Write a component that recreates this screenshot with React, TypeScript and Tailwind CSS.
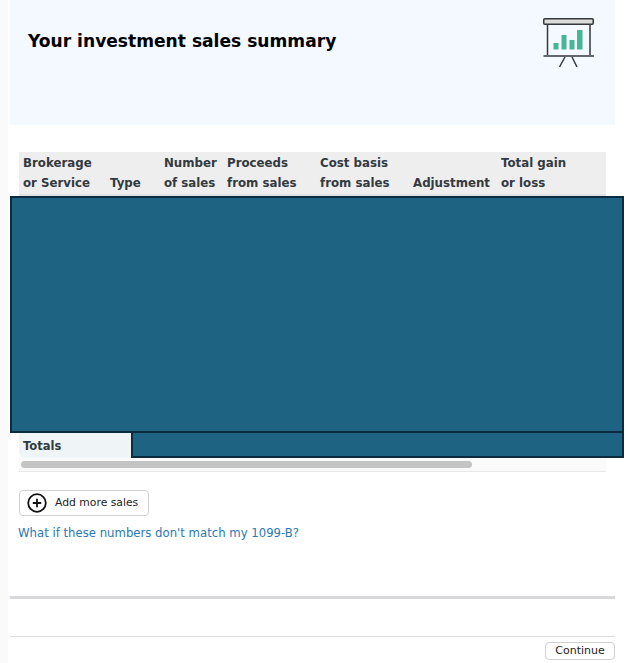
const font = "font-['DejaVu_Sans',sans-serif]"

const columns = [
  { width: 'w-[87px]', top: 'Brokerage', bottom: 'or Service' },
  { width: 'w-[54px]', top: '', bottom: 'Type' },
  { width: 'w-[63px]', top: 'Number', bottom: 'of sales' },
  { width: 'w-[93px]', top: 'Proceeds', bottom: 'from sales' },
  { width: 'w-[93px]', top: 'Cost basis', bottom: 'from sales' },
  { width: 'w-[88px]', top: '', bottom: 'Adjustment' },
  { width: 'w-[105px]', top: 'Total gain', bottom: 'or loss' },
]

function PresentationIcon() {
  return (
    <svg width="52" height="50" viewBox="0 0 52 50" fill="none">
      <rect x="0.75" y="0.75" width="49.5" height="5.5" rx="1" fill="#dcdcd8" stroke="#33383b" strokeWidth="1.5" />
      <path d="M4.5 7V37M47 7V37" stroke="#33383b" strokeWidth="1.5" />
      <path d="M0.5 38H51" stroke="#33383b" strokeWidth="1.6" />
      <path d="M22 39L16.5 49M29 39L34 49" stroke="#33383b" strokeWidth="1.5" />
      <rect x="10.5" y="25" width="5" height="6.5" rx="0.5" fill="#45b795" />
      <rect x="18.5" y="17" width="5" height="14.5" rx="0.5" fill="#45b795" />
      <rect x="26.5" y="22" width="5" height="9.5" rx="0.5" fill="#45b795" />
      <rect x="34" y="12" width="5.5" height="19.5" rx="0.5" fill="#45b795" />
    </svg>
  )
}

function PlusCircleIcon() {
  return (
    <svg width="20" height="20" viewBox="0 0 20 20" fill="none">
      <circle cx="10" cy="10" r="8.8" stroke="#111" strokeWidth="1.8" />
      <path d="M10 5.8V14.2M5.8 10H14.2" stroke="#111" strokeWidth="1.8" />
    </svg>
  )
}

export default function App() {
  return (
    <div className={`${font} flex w-[630px] h-[663px] overflow-hidden bg-white`}>
      <div className="w-[8px] shrink-0 bg-[#fafafa]" />
      <div className="ml-[2px] w-[605px] shrink-0">
        <div className="h-[125px] bg-[#f4f8ff] pl-[18px] pr-[20px] pt-[18px] flex items-start justify-between">
          <h1 className="mt-[10px] text-[17.1px] leading-[26px] font-bold text-black">Your investment sales summary</h1>
          <PresentationIcon />
        </div>

        <div className="mt-[27px] ml-[9px] w-[587px] h-[44px] bg-[#eeeeee] border-b-2 border-[#e0e3e6] flex pl-[4px] pt-[2px]">
          {columns.map(col => (
            <div key={col.bottom} className={`${col.width} shrink-0 text-[11.8px] leading-[19.5px] font-bold text-[#333a3f]`}>
              <div className="h-[19.5px]">{col.top}</div>
              <div>{col.bottom}</div>
            </div>
          ))}
        </div>

        <div className="w-[614px] h-[237px] bg-[#1f6383] border-2 border-[#0b2c40]" />

        <div className="ml-[9px] -mt-[2px] flex h-[27px] w-[605px]">
          <div className="w-[112px] shrink-0 mt-[2px] bg-[#eff4f6] rounded-bl-[6px] pl-[4px] text-[11.5px] leading-[27px] font-bold text-[#333a3f]">Totals</div>
          <div className="w-[493px] shrink-0 bg-[#1f6383] border-2 border-[#0b2c40]" />
        </div>

        <div className="ml-[9px] w-[587px] h-[14px] bg-[#fafafa] border-b border-[#e8e8e8] pt-[3px] pl-[2px]">
          <div className="w-[451px] h-[7px] rounded-full bg-[#c4c4c4]" />
        </div>

        <button className="mt-[18px] ml-[9px] h-[26px] w-[130px] flex items-center gap-[8px] pl-[7px] bg-white border border-[#d0d0d0] rounded-[4px] text-[10.8px] text-[#222]">
          <PlusCircleIcon />
          Add more sales
        </button>

        <a className="block mt-[9px] ml-[8px] text-[11.7px] leading-[16px] text-[#2a78b8]">What if these numbers don't match my 1099-B?</a>

        <div className="mt-[55px] h-[3px] bg-[#d8d8dc]" />
        <div className="mt-[37px] h-px bg-[#dcdcdc]" />
        <div className="mt-[5px] flex justify-end">
          <button className="w-[70px] h-[18px] bg-white border border-[#d0d0d0] rounded-[4px] text-[11px] leading-[16px] text-[#222]">Continue</button>
        </div>
      </div>
    </div>
  )
}
